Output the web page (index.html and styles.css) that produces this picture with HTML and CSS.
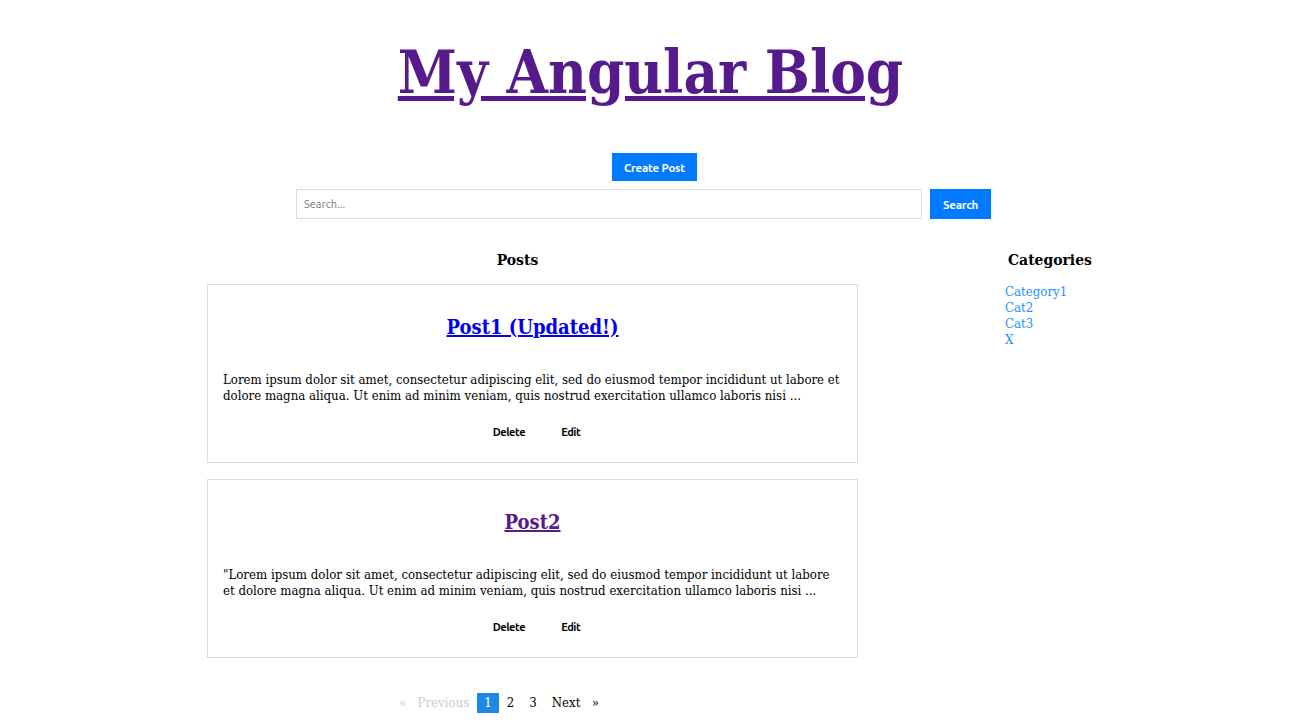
FILE: index.html
```html
<!DOCTYPE html>
<html>
<head>
<meta charset="utf-8">
<title>My Angular Blog</title>
<link rel="stylesheet" href="styles.css">
</head>
<body>
<header class="header">
  <h1 class="site-title"><a href="#home" class="visited">My Angular Blog</a></h1>
</header>
<div class="toolbar">
  <button class="btn btn-create">Create Post</button>
  <form class="search">
    <input class="search-input" type="text" placeholder="Search...">
    <button class="btn btn-search" type="button">Search</button>
  </form>
</div>
<main class="layout">
  <section class="posts">
    <h2 class="section-title posts-title">Posts</h2>
    <article class="card">
      <h3 class="post-title"><a href="#p1" class="unvisited">Post1 (Updated!)</a></h3>
      <p class="excerpt">Lorem ipsum dolor sit amet, consectetur adipiscing elit, sed do eiusmod tempor incididunt ut labore et dolore magna aliqua. Ut enim ad minim veniam, quis nostrud exercitation ullamco laboris nisi ...</p>
      <div class="actions"><button class="act">Delete</button><button class="act">Edit</button></div>
    </article>
    <article class="card">
      <h3 class="post-title"><a href="#p2" class="visited">Post2</a></h3>
      <p class="excerpt">"Lorem ipsum dolor sit amet, consectetur adipiscing elit, sed do eiusmod tempor incididunt ut labore et dolore magna aliqua. Ut enim ad minim veniam, quis nostrud exercitation ullamco laboris nisi ...</p>
      <div class="actions"><button class="act">Delete</button><button class="act">Edit</button></div>
    </article>
    <nav class="pager">
      <span class="pg disabled">«&nbsp;&nbsp;&nbsp;Previous</span>
      <span class="pg current">1</span>
      <span class="pg">2</span>
      <span class="pg">3</span>
      <span class="pg">Next&nbsp;&nbsp;&nbsp;»</span>
    </nav>
  </section>
  <aside class="cats">
    <h2 class="section-title">Categories</h2>
    <ul class="cat-list">
      <li><a href="#c1">Category1</a></li>
      <li><a href="#c2">Cat2</a></li>
      <li><a href="#c3">Cat3</a></li>
      <li><a href="#c4">X</a></li>
    </ul>
  </aside>
</main>
</body>
</html>
```
FILE: styles.css
```css
* { box-sizing: border-box; }
html, body { margin: 0; padding: 0; background: #fff; }
body {
  font-family: "DejaVu Serif", serif;
  font-stretch: condensed;
  color: #000;
}
.header { text-align: center; padding-top: 34px; padding-left: 11px; }
.site-title {
  margin: 0;
  font-size: 59.4px;
  font-weight: bold;
  line-height: 76px;
}
.visited { color: #551a8b; }
.unvisited { color: #0000ee; }
.toolbar {
  display: flex;
  flex-direction: column;
  align-items: center;
  margin-top: 43px;
  gap: 8px;
}
.btn {
  font-family: "Ubuntu", Roboto, "Noto Sans", sans-serif;
  font-stretch: normal;
  font-weight: bold;
  font-size: 11.5px;
  letter-spacing: -0.2px;
  color: #fff;
  background: #007bff;
  border: none;
  height: 28px;
  padding: 0 14px;
}
.btn-create { width: 85px; padding: 0; margin-left: 19px; }
.search { display: flex; gap: 8px; margin: 0 0 0 -3px; }
.search-input {
  width: 626px;
  height: 30px;
  border: 1px solid #ddd;
  padding: 0 7px;
  font-family: "Ubuntu", "Noto Sans", sans-serif;
  font-stretch: normal;
  font-size: 11px;
}
.search-input::placeholder { color: #777; }
.btn-search { height: 30px; width: 61px; margin: 0; padding: 0; }
.layout {
  display: flex;
  margin-top: 29px;
  padding-left: 207px;
}
.posts { width: 651px; }
.section-title {
  margin: 0;
  font-size: 15.5px;
  font-weight: bold;
  line-height: 24px;
  text-align: center;
}
.posts-title { margin-left: -30px; margin-bottom: 12px; }
.card {
  border: 1px solid #ddd;
  padding: 29px 15px 20px;
  margin-bottom: 16px;
  height: 179px;
}
.post-title {
  margin: 0 0 32px;
  text-align: center;
  font-size: 20px;
  line-height: 26px;
}
.excerpt {
  margin: 0 0 20px;
  font-size: 13.12px;
  line-height: 16px;
}
.actions { display: flex; justify-content: center; gap: 36px; margin-left: 8px; }
.act {
  font-family: "Ubuntu", Roboto, "Noto Sans", sans-serif;
  font-stretch: normal;
  font-weight: bold;
  font-size: 11px;
  letter-spacing: -0.4px;
  line-height: 16px;
  background: none;
  border: none;
  padding: 0;
  color: #000;
}
.pager {
  display: flex;
  justify-content: center;
  align-items: center;
  margin-top: 35px;
  margin-left: -67px;
  font-size: 13.12px;
}
.pg { padding: 2px 7.5px; line-height: 16px; }
.disabled { color: #ccc; }
.current { background: #1e88e5; color: #fff; }
.cats { margin-left: 147px; width: 140px; }
.cats .section-title { text-align: left; padding-left: 3px; margin-bottom: 12px; }
.cat-list { list-style: none; margin: 0; padding: 0; }
.cat-list li { font-size: 13.12px; line-height: 16px; }
.cat-list a { color: #1e90ff; text-decoration: none; }
```
